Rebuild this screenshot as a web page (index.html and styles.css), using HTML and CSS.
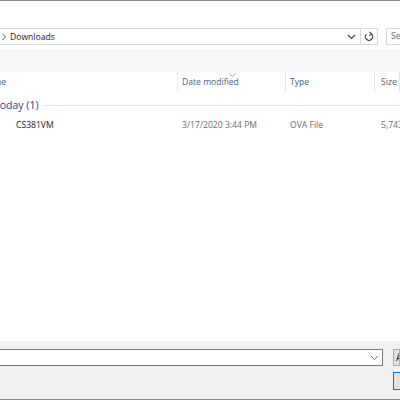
FILE: index.html
```
<!DOCTYPE html>
<html lang="en">
<head>
    <meta charset="UTF-8">
    <title>Open</title>
    <link rel="stylesheet" href="styles.css">
</head>
<body>
    <div class="dialog">
        <div class="title-space"></div>

        <div class="navbar">
            <div class="address">
                <div class="crumbs">
                    <svg class="crumb-arrow" width="6" height="8" viewBox="0 0 6 8"><path d="M1.5 1 L4.5 4 L1.5 7" fill="none" stroke="#555" stroke-width="1"/></svg>
                    <span>Downloads</span>
                </div>
                <div class="addr-drop">
                    <svg width="9" height="6" viewBox="0 0 9 6"><path d="M1 1 L4.5 4.5 L8 1" fill="none" stroke="#444" stroke-width="1.2"/></svg>
                </div>
                <div class="addr-refresh">
                    <svg width="10" height="11" viewBox="0 0 10 11"><path d="M7.6 3.2 A3.6 3.6 0 1 1 2.4 3.2" fill="none" stroke="#444" stroke-width="1.1"/><path d="M5.4 0.8 L8 3.3 L5.2 4.6" fill="none" stroke="#444" stroke-width="1.1"/></svg>
                </div>
            </div>
            <div class="search">Search Downloads</div>
        </div>

        <div class="commandbar"></div>

        <div class="files">
            <div class="cols header">
                <div class="col">Name</div>
                <div class="col sorted">Date modified
                    <svg class="sort-mark" width="7" height="4" viewBox="0 0 7 4"><path d="M0.5 0.5 L3.5 3.3 L6.5 0.5" fill="none" stroke="#a8a8a8" stroke-width="1"/></svg>
                </div>
                <div class="col">Type</div>
                <div class="col">Size</div>
            </div>

            <div class="group">
                <span>Today (1)</span>
                <div class="group-line"></div>
            </div>

            <div class="cols item">
                <div class="col name">CS381VM</div>
                <div class="col">3/17/2020 3:44 PM</div>
                <div class="col">OVA File</div>
                <div class="col">5,743,212 KB</div>
            </div>
        </div>

        <div class="bottom">
            <div class="bottom-row">
                <div class="filename">
                    <svg width="9" height="6" viewBox="0 0 9 6"><path d="M1 1 L4.5 4.5 L8 1" fill="none" stroke="#777" stroke-width="1"/></svg>
                </div>
                <div class="btn filter">All Files</div>
            </div>
            <div class="bottom-row right">
                <div class="btn primary">Open</div>
            </div>
        </div>
    </div>
</body>
</html>
```

FILE: styles.css
```
html, body {
    margin: 0;
    padding: 0;
}
body {
    width: 400px;
    height: 400px;
    overflow: hidden;
    background-color: #fff;
    font-family: "Open Sans", "Noto Sans", sans-serif;
    font-size: 8.6px;
    color: #1a1a1a;
}
.dialog {
    height: 400px;
    display: flex;
    flex-direction: column;
    border-top: 1px solid #8c8c8c;
    box-sizing: border-box;
}
.title-space {
    height: 27px;
}

/* address + search */
.navbar {
    height: 17px;
    display: flex;
    gap: 8px;
    margin-left: -30px;
}
.address {
    flex: 1;
    display: flex;
    border: 1px solid #d9d9d9;
    box-sizing: border-box;
}
.crumbs {
    flex: 1;
    display: flex;
    align-items: center;
    padding-left: 30px;
    gap: 3px;
}
.addr-drop {
    width: 17px;
    display: flex;
    align-items: center;
    justify-content: center;
    border-right: 1px solid #d9d9d9;
}
.addr-refresh {
    width: 16px;
    display: flex;
    align-items: center;
    justify-content: center;
}
.search {
    width: 60px;
    margin-right: -46px;
    border: 1px solid #d9d9d9;
    box-sizing: border-box;
    padding-left: 4px;
    line-height: 15px;
    color: #6d6d6d;
    white-space: nowrap;
    overflow: hidden;
}

.commandbar {
    height: 23px;
    margin-top: 4px;
    background-color: #f5f6f7;
}

/* file list */
.files {
    flex: 1;
    margin-left: -22px;
}
.cols {
    display: grid;
    grid-template-columns: 200px 108px 89px 1fr;
}
.col {
    white-space: nowrap;
    overflow: hidden;
    padding-left: 4px;
}
.header {
    height: 20px;
}
.header .col {
    position: relative;
    line-height: 20px;
    color: #4c607a;
    border-right: 1px solid #e5e5e5;
}
.header .col:nth-child(4) {
    padding-left: 6px;
}
.sort-mark {
    position: absolute;
    left: 51px;
    top: 1px;
}
.group {
    display: flex;
    align-items: center;
    gap: 4px;
    height: 18px;
    margin-top: 4px;
    padding-left: 16px;
    color: #2a3d9c;
    font-size: 10.5px;
}
.group-line {
    flex: 1;
    height: 1px;
    background-color: #e2e5ee;
}
.item {
    height: 20px;
    line-height: 20px;
    margin-top: 1px;
    color: #6d6d6d;
}
.item .name {
    padding-left: 38px;
    color: #1a1a1a;
}
.item .col:nth-child(4) {
    padding-left: 6px;
}

/* file name + buttons */
.bottom {
    height: 59px;
    background-color: #f0f0f0;
    border-bottom: 1px solid #8c8c8c;
    box-sizing: border-box;
    padding-top: 8px;
    display: flex;
    flex-direction: column;
    gap: 6px;
}
.bottom-row {
    display: flex;
    gap: 10px;
    height: 17px;
}
.bottom-row.right {
    justify-content: flex-end;
    height: 18px;
    margin-right: -60px;
}
.filename {
    flex: 1;
    margin-left: -20px;
    background-color: #fff;
    border: 1px solid #7a7a7a;
    box-sizing: border-box;
    display: flex;
    align-items: center;
    justify-content: flex-end;
    padding-right: 3px;
}
.btn {
    box-sizing: border-box;
    background-color: #e1e1e1;
    border: 1px solid #adadad;
    line-height: 15px;
    white-space: nowrap;
    overflow: hidden;
}
.filter {
    width: 7px;
    padding-left: 2px;
    font-size: 10px;
}
.primary {
    width: 67px;
    text-align: center;
    border-color: #0078d7;
}
```
